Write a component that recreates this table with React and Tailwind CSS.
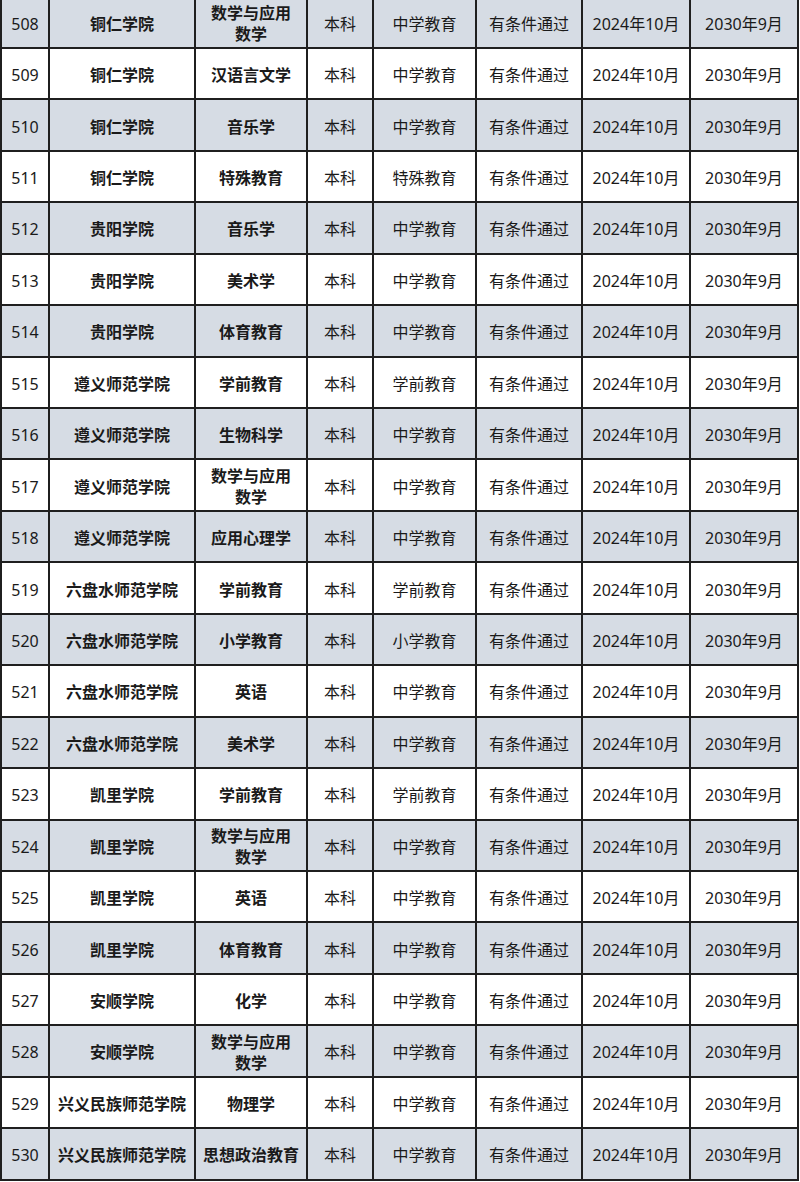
import React from "react";

const rows = [
  ["508", "铜仁学院", "数学与应用|数学", "中学教育"],
  ["509", "铜仁学院", "汉语言文学", "中学教育"],
  ["510", "铜仁学院", "音乐学", "中学教育"],
  ["511", "铜仁学院", "特殊教育", "特殊教育"],
  ["512", "贵阳学院", "音乐学", "中学教育"],
  ["513", "贵阳学院", "美术学", "中学教育"],
  ["514", "贵阳学院", "体育教育", "中学教育"],
  ["515", "遵义师范学院", "学前教育", "学前教育"],
  ["516", "遵义师范学院", "生物科学", "中学教育"],
  ["517", "遵义师范学院", "数学与应用|数学", "中学教育"],
  ["518", "遵义师范学院", "应用心理学", "中学教育"],
  ["519", "六盘水师范学院", "学前教育", "学前教育"],
  ["520", "六盘水师范学院", "小学教育", "小学教育"],
  ["521", "六盘水师范学院", "英语", "中学教育"],
  ["522", "六盘水师范学院", "美术学", "中学教育"],
  ["523", "凯里学院", "学前教育", "学前教育"],
  ["524", "凯里学院", "数学与应用|数学", "中学教育"],
  ["525", "凯里学院", "英语", "中学教育"],
  ["526", "凯里学院", "体育教育", "中学教育"],
  ["527", "安顺学院", "化学", "中学教育"],
  ["528", "安顺学院", "数学与应用|数学", "中学教育"],
  ["529", "兴义民族师范学院", "物理学", "中学教育"],
  ["530", "兴义民族师范学院", "思想政治教育", "中学教育"],
];

const Cell = ({ children, bold }) => (
  <div
    className={`h-[51.45px] pt-[4px] flex items-center justify-center text-center border-r-2 border-b-2 border-[#1f1f1f] text-[16px] leading-[21px] text-[#1a1a1a] whitespace-nowrap ${
      bold ? "font-bold" : "font-normal"
    }`}
  >
    {children}
  </div>
);

export default function App() {
  return (
    <div
      className="w-[800px] h-[1182px] overflow-hidden bg-white"
      style={{ fontFamily: '"Noto Sans", "Noto Sans CJK SC", sans-serif' }}
    >
      <div className="mt-[-4.5px] w-[799px] border-l-2 border-t-2 border-[#1f1f1f] grid grid-cols-[48px_146px_112px_66px_103px_106px_108px_108px]">
        {rows.map(([no, school, major, type], i) => {
          const bg = i % 2 === 0 ? "bg-[#d6dce4]" : "bg-white";
          const majorLines = major.split("|");
          return (
            <div key={no} className="contents">
              {[
                [no, false],
                [school, true],
                [
                  majorLines.length > 1 ? (
                    <span>
                      {majorLines[0]}
                      <br />
                      {majorLines[1]}
                    </span>
                  ) : (
                    major
                  ),
                  true,
                ],
                ["本科", false],
                [type, false],
                ["有条件通过", false],
                ["2024年10月", false],
                ["2030年9月", false],
              ].map(([txt, bold], j) => (
                <div key={j} className={bg}>
                  <Cell bold={bold}>{txt}</Cell>
                </div>
              ))}
            </div>
          );
        })}
      </div>
    </div>
  );
}
